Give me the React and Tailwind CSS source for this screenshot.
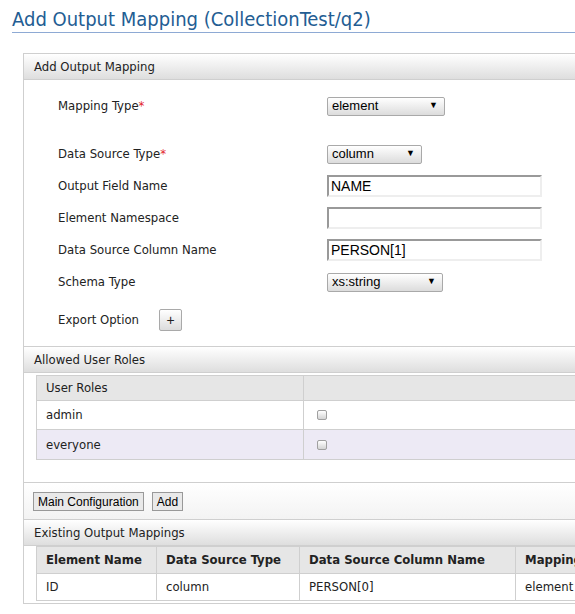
import React from 'react';

const font = "font-['DejaVu_Sans_Condensed','DejaVu_Sans',sans-serif]";
const arial = "font-['Liberation_Sans',Arial,sans-serif]";

const Select = ({ value, width }) => (
    <div
        className={`${arial} flex items-center justify-between h-[19px] px-[4px] text-[13px] text-black border border-[#a9a9a9] rounded-[2px] bg-gradient-to-b from-white to-[#dcdcdc]`}
        style={{ width }}
    >
        <span>{value}</span>
        <span className="text-[9px] pr-[2px]">▼</span>
    </div>
);

const TextInput = ({ value }) => (
    <div
        className={`${arial} flex items-center w-[215px] h-[22px] px-[2px] text-[14px] text-black bg-white border-2 border-t-[#999] border-l-[#999] border-b-[#eee] border-r-[#eee]`}
    >
        {value}
    </div>
);

const SectionHeader = ({ children }) => (
    <div className="h-[27px] flex items-center px-[10px] text-[13px] text-[#222] border-y border-[#cfcfcf] bg-gradient-to-b from-white to-[#dedede]">
        {children}
    </div>
);

const Checkbox = () => (
    <div className="w-[10px] h-[10px] rounded-[2px] border border-[#a0a0a0] bg-gradient-to-b from-white to-[#d4d4d4]" />
);

const FormRow = ({ label, required, children }) => (
    <div className="flex items-center h-[32px]">
        <div className="w-[303px] pl-[34px] text-[13px] text-[#222]">
            {label}
            {required && <span className="text-[#e3262b]">*</span>}
        </div>
        {children}
    </div>
);

export default function App() {
    return (
        <div className={`${font} w-[575px] h-[614px] overflow-hidden bg-white`}>
            <h1 className="ml-[12px] pt-[8px] pb-[1px] text-[20px] leading-[23px] text-[#235d93] border-b border-[#8eaad4]">
                Add Output Mapping (CollectionTest/q2)
            </h1>

            <div className="ml-[23px] mt-[20px] w-[640px] border-l border-[#cfcfcf]">
                <SectionHeader>Add Output Mapping</SectionHeader>

                <div className="pt-[10px] pb-[4px]">
                    <FormRow label="Mapping Type" required>
                        <Select value="element" width={118} />
                    </FormRow>
                    <div className="h-[16px]" />
                    <FormRow label="Data Source Type" required>
                        <Select value="column" width={95} />
                    </FormRow>
                    <FormRow label="Output Field Name">
                        <TextInput value="NAME" />
                    </FormRow>
                    <FormRow label="Element Namespace">
                        <TextInput value="" />
                    </FormRow>
                    <FormRow label="Data Source Column Name">
                        <TextInput value="PERSON[1]" />
                    </FormRow>
                    <FormRow label="Schema Type">
                        <Select value="xs:string" width={116} />
                    </FormRow>
                    <div className="flex items-center h-[44px] pl-[34px] text-[13px] text-[#222]">
                        <span className="w-[101px]">Export Option</span>
                        <button className={`${arial} w-[23px] h-[22px] flex items-center justify-center text-[14px] border border-[#a9a9a9] rounded-[2px] bg-gradient-to-b from-white to-[#dcdcdc]`}>
                            +
                        </button>
                    </div>
                </div>

                <SectionHeader>Allowed User Roles</SectionHeader>
                <div className="pl-[12px] pt-[2px] pb-[22px]">
                    <table className="w-[610px] border-collapse text-[13px] text-[#222]">
                        <tbody>
                            <tr className="h-[25px] bg-[#e6e6e6]">
                                <td className="w-[267px] pl-[9px] border border-[#cfcfcf]">User Roles</td>
                                <td className="border border-[#cfcfcf]"></td>
                            </tr>
                            <tr className="h-[29px] bg-white">
                                <td className="pl-[9px] border border-[#cfcfcf]">admin</td>
                                <td className="pl-[13px] border border-[#cfcfcf]"><Checkbox /></td>
                            </tr>
                            <tr className="h-[30px] bg-[#edeaf5]">
                                <td className="pl-[9px] border border-[#cfcfcf]">everyone</td>
                                <td className="pl-[13px] border border-[#cfcfcf]"><Checkbox /></td>
                            </tr>
                        </tbody>
                    </table>
                </div>

                <div className="h-[37px] flex items-center gap-[8px] px-[9px] pt-[1px] border-t border-[#cfcfcf] bg-gradient-to-b from-white to-[#f3f3f3]">
                    <button className={`${arial} h-[19px] px-[4px] text-[12px] text-black border border-[#999] bg-[#e9e9e9]`}>
                        Main Configuration
                    </button>
                    <button className={`${arial} h-[19px] px-[4px] text-[12px] text-black border border-[#999] bg-[#e9e9e9]`}>
                        Add
                    </button>
                </div>

                <SectionHeader>Existing Output Mappings</SectionHeader>
                <div className="pl-[12px] pt-[0px] pb-[2px] border-b border-[#cfcfcf]">
                    <table className="w-[620px] border-collapse text-[13px] text-[#222]">
                        <tbody>
                            <tr className="h-[27px] bg-[#e6e6e6] font-bold">
                                <td className="w-[120px] pl-[9px] border border-[#cfcfcf]">Element Name</td>
                                <td className="w-[143px] pl-[9px] border border-[#cfcfcf]">Data Source Type</td>
                                <td className="w-[216px] pl-[9px] border border-[#cfcfcf]">Data Source Column Name</td>
                                <td className="pl-[9px] border border-[#cfcfcf]">Mapping Type</td>
                            </tr>
                            <tr className="h-[27px] bg-white">
                                <td className="pl-[9px] border border-[#cfcfcf]">ID</td>
                                <td className="pl-[9px] border border-[#cfcfcf]">column</td>
                                <td className="pl-[9px] border border-[#cfcfcf]">PERSON[0]</td>
                                <td className="pl-[9px] border border-[#cfcfcf]">element</td>
                            </tr>
                        </tbody>
                    </table>
                </div>
            </div>
        </div>
    );
}
